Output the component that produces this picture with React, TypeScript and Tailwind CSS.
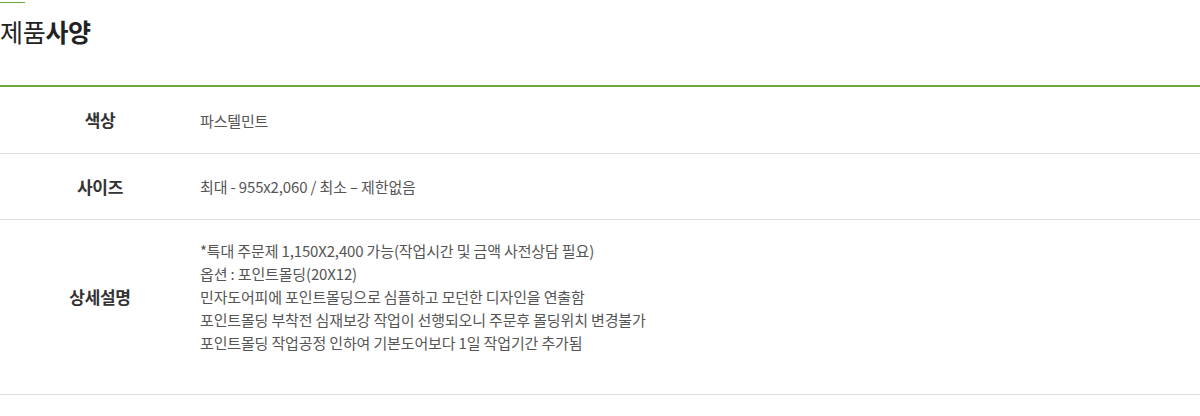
const rows = [
  { label: '색상', lines: ['파스텔민트'], h: 'h-[67px]' },
  { label: '사이즈', lines: ['최대 - 955x2,060 / 최소 – 제한없음'], h: 'h-[66px]' },
  {
    label: '상세설명',
    lines: [
      '*특대 주문제 1,150X2,400 가능(작업시간 및 금액 사전상담 필요)',
      '옵션 : 포인트몰딩(20X12)',
      '민자도어피에 포인트몰딩으로 심플하고 모던한 디자인을 연출함',
      '포인트몰딩 부착전 심재보강 작업이 선행되오니 주문후 몰딩위치 변경불가',
      '포인트몰딩 작업공정 인하여 기본도어보다 1일 작업기간 추가됨',
    ],
    h: '',
  },
]

export default function App() {
  return (
    <div className="w-[1200px] h-[416px] bg-white font-['Noto_Sans_CJK_KR',sans-serif]">
      <div className="pt-[2px]">
        <div className="w-[25px] h-px bg-[#6aa83a]" />
      </div>
      <h2 className="mt-[13px] text-[25px] leading-[30px] tracking-[-0.3px] text-[#222]">
        제품<span className="font-bold">사양</span>
      </h2>
      <div className="mt-[39px] border-t-2 border-[#6aa83a]">
        {rows.map((r, i) => (
          <div
            key={r.label}
            className={
              i === 2
                ? 'flex border-b border-[#dddddd] pt-[19px] pb-[40px]'
                : `flex ${r.h} items-center border-b border-[#dddddd]`
            }
          >
            <div className="w-[200px] flex items-center justify-center text-[17px] font-bold text-[#333] tracking-[-0.3px]">
              {r.label}
            </div>
            <div className="flex-1 text-[15px] leading-[23px] tracking-[-0.15px] text-[#555]">
              {r.lines.map((l) => (
                <div key={l}>{l}</div>
              ))}
            </div>
          </div>
        ))}
      </div>
    </div>
  )
}
